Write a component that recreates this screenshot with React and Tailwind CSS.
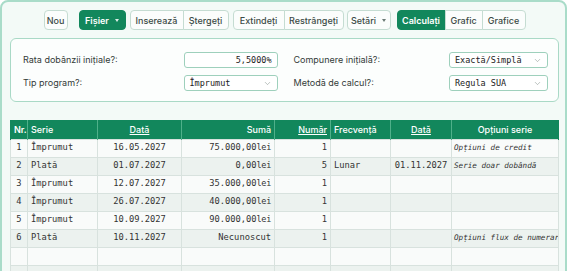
import { ChevronDown } from 'lucide-react'

const GREEN = 'bg-[#12875c]'

function Btn({ children, active, className = '' }) {
  return (
    <button
      className={
        'flex h-5 items-center justify-center border text-[9px] leading-none ' +
        (active
          ? 'border-[#12875c] bg-[#12875c] font-semibold text-white '
          : 'border-[#c5dcd2] bg-[#fbfdfc] font-medium text-[#3c4b46] ') +
        className
      }
    >
      {children}
    </button>
  )
}

function Caret({ light }) {
  return (
    <span
      className={
        'ml-[6px] inline-block h-0 w-0 border-x-[2.5px] border-t-[3px] border-x-transparent ' +
        (light ? 'border-t-white/85' : 'border-t-[#6b7a75]')
      }
    />
  )
}

function Field({ label, children }) {
  return (
    <div className="flex h-4 items-center justify-between">
      <span className="text-[9px] text-[#333b38]">{label}</span>
      {children}
    </div>
  )
}

function Select({ value, w }) {
  return (
    <div className={'flex h-4 items-center justify-between rounded-[3px] border border-[#9ed0bc] bg-white pl-[5px] pr-[5px] ' + w}>
      <span className="font-['DejaVu_Sans_Mono',monospace] text-[8.5px] text-[#222]">{value}</span>
      <ChevronDown size={9} strokeWidth={1.5} className="text-[#8a9691]" />
    </div>
  )
}

const rows = [
  { nr: 1, serie: 'Împrumut', data: '16.05.2027', suma: '75.000,00', lei: true, numar: '1', frec: '', data2: '', opt: 'Opțiuni de credit' },
  { nr: 2, serie: 'Plată', data: '01.07.2027', suma: '0,00', lei: true, numar: '5', frec: 'Lunar', data2: '01.11.2027', opt: 'Serie doar dobândă' },
  { nr: 3, serie: 'Împrumut', data: '12.07.2027', suma: '35.000,00', lei: true, numar: '1', frec: '', data2: '', opt: '' },
  { nr: 4, serie: 'Împrumut', data: '26.07.2027', suma: '40.000,00', lei: true, numar: '1', frec: '', data2: '', opt: '' },
  { nr: 5, serie: 'Împrumut', data: '10.09.2027', suma: '90.000,00', lei: true, numar: '1', frec: '', data2: '', opt: '' },
  { nr: 6, serie: 'Plată', data: '10.11.2027', suma: 'Necunoscut', lei: false, numar: '1', frec: '', data2: '', opt: 'Opțiuni flux de numerar' },
  { nr: '', serie: '', data: '', suma: '', numar: '', frec: '', data2: '', opt: '' },
  { nr: '', serie: '', data: '', suma: '', numar: '', frec: '', data2: '', opt: '' },
]

export default function App() {
  const th = 'border-x border-[#4fb08a] px-[3px] text-[9px] font-medium text-white'
  const cell = 'border border-[#d8e2de] text-[#333] overflow-hidden '
  const td = cell + 'px-[3px] text-[8.75px]'
  return (
    <div className="min-h-screen bg-white font-['Inter',sans-serif]">
      <div className="h-[300px] w-[567px] overflow-hidden rounded-lg border-2 border-[#a9dcc9] bg-[#f3faf7] pl-2 pr-[6px] pt-2">
        {/* bara de unelte */}
        <div className="flex justify-center">
          <Btn className="mr-[11px] w-[24px] rounded">Nou</Btn>
          <Btn active className="mr-[4px] w-[47px] rounded">Fișier<Caret light /></Btn>
          <div className="mr-[4px] flex">
            <Btn className="w-[54px] rounded-l">Inserează</Btn>
            <Btn className="-ml-px w-[46px] rounded-r">Ștergeți</Btn>
          </div>
          <div className="mr-[3px] flex">
            <Btn className="w-[52px] rounded-l">Extindeți</Btn>
            <Btn className="-ml-px w-[60px] rounded-r">Restrângeți</Btn>
          </div>
          <Btn className="mr-[6px] w-[44px] rounded">Setări<Caret /></Btn>
          <div className="flex">
            <Btn active className="w-[49px] rounded-l">Calculați</Btn>
            <Btn className="-ml-px w-[38px]">Grafic</Btn>
            <Btn className="-ml-px w-[44px] rounded-r">Grafice</Btn>
          </div>
        </div>

        {/* parametri */}
        <div className="mt-2 grid grid-cols-2 gap-x-4 gap-y-[7px] rounded-md border border-[#a9d9c6] bg-[#fcfefd] pb-[10px] pl-3 pr-[10px] pt-[13px]">
          <Field label="Rata dobânzii inițiale?:">
            <div className="flex h-4 w-[94px] items-center justify-end rounded-[3px] border border-[#9ed0bc] bg-white pr-[5px] font-['DejaVu_Sans_Mono',monospace] text-[8.5px] text-[#222]">
              5,5000%
            </div>
          </Field>
          <Field label="Compunere inițială?:">
            <Select value="Exactă/Simplă" w="w-[99px]" />
          </Field>
          <Field label="Tip program?:">
            <Select value="Împrumut" w="w-[94px]" />
          </Field>
          <Field label="Metodă de calcul?:">
            <Select value="Regula SUA" w="w-[99px]" />
          </Field>
        </div>

        {/* tabel serii */}
        <table className="mt-[18px] w-full table-fixed border-collapse">
          <thead>
            <tr className={'h-[19px] ' + GREEN}>
              <th className={th + ' w-[17px] border-l-[#12875c] px-0 text-center font-semibold'}>Nr.</th>
              <th className={th + ' w-[70px] text-left'}>Serie</th>
              <th className={th + ' w-[84px] text-center underline'}>Dată</th>
              <th className={th + ' w-[93px] text-right'}>Sumă</th>
              <th className={th + ' w-[56px] text-right underline'}>Număr</th>
              <th className={th + ' w-[60px] text-left'}>Frecvență</th>
              <th className={th + ' w-[61px] text-center underline'}>Dată</th>
              <th className={th + ' border-r-[#12875c] text-center'}>Opțiuni serie</th>
            </tr>
          </thead>
          <tbody className="font-['DejaVu_Sans_Mono',monospace]">
            {rows.map((r, i) => (
              <tr key={i} className={'h-[18px] ' + (i % 2 ? 'bg-[#ecf2ef]' : 'bg-[#f9fbfa]')}>
                <td className={cell + 'px-0 text-center text-[8.75px]'}>{r.nr}</td>
                <td className={td}>{r.serie}</td>
                <td className={td + ' text-center'}>{r.data}</td>
                <td className={td + ' text-right'}>
                  {r.suma}
                  {r.lei && <span className="text-[8.5px] tracking-[-0.3px]">lei</span>}
                </td>
                <td className={td + ' text-right'}>{r.numar}</td>
                <td className={td}>{r.frec}</td>
                <td className={td + ' text-center'}>{r.data2}</td>
                <td className={cell + 'whitespace-nowrap px-[2px] text-[7.6px] italic'}>{r.opt}</td>
              </tr>
            ))}
          </tbody>
        </table>
      </div>
    </div>
  )
}
